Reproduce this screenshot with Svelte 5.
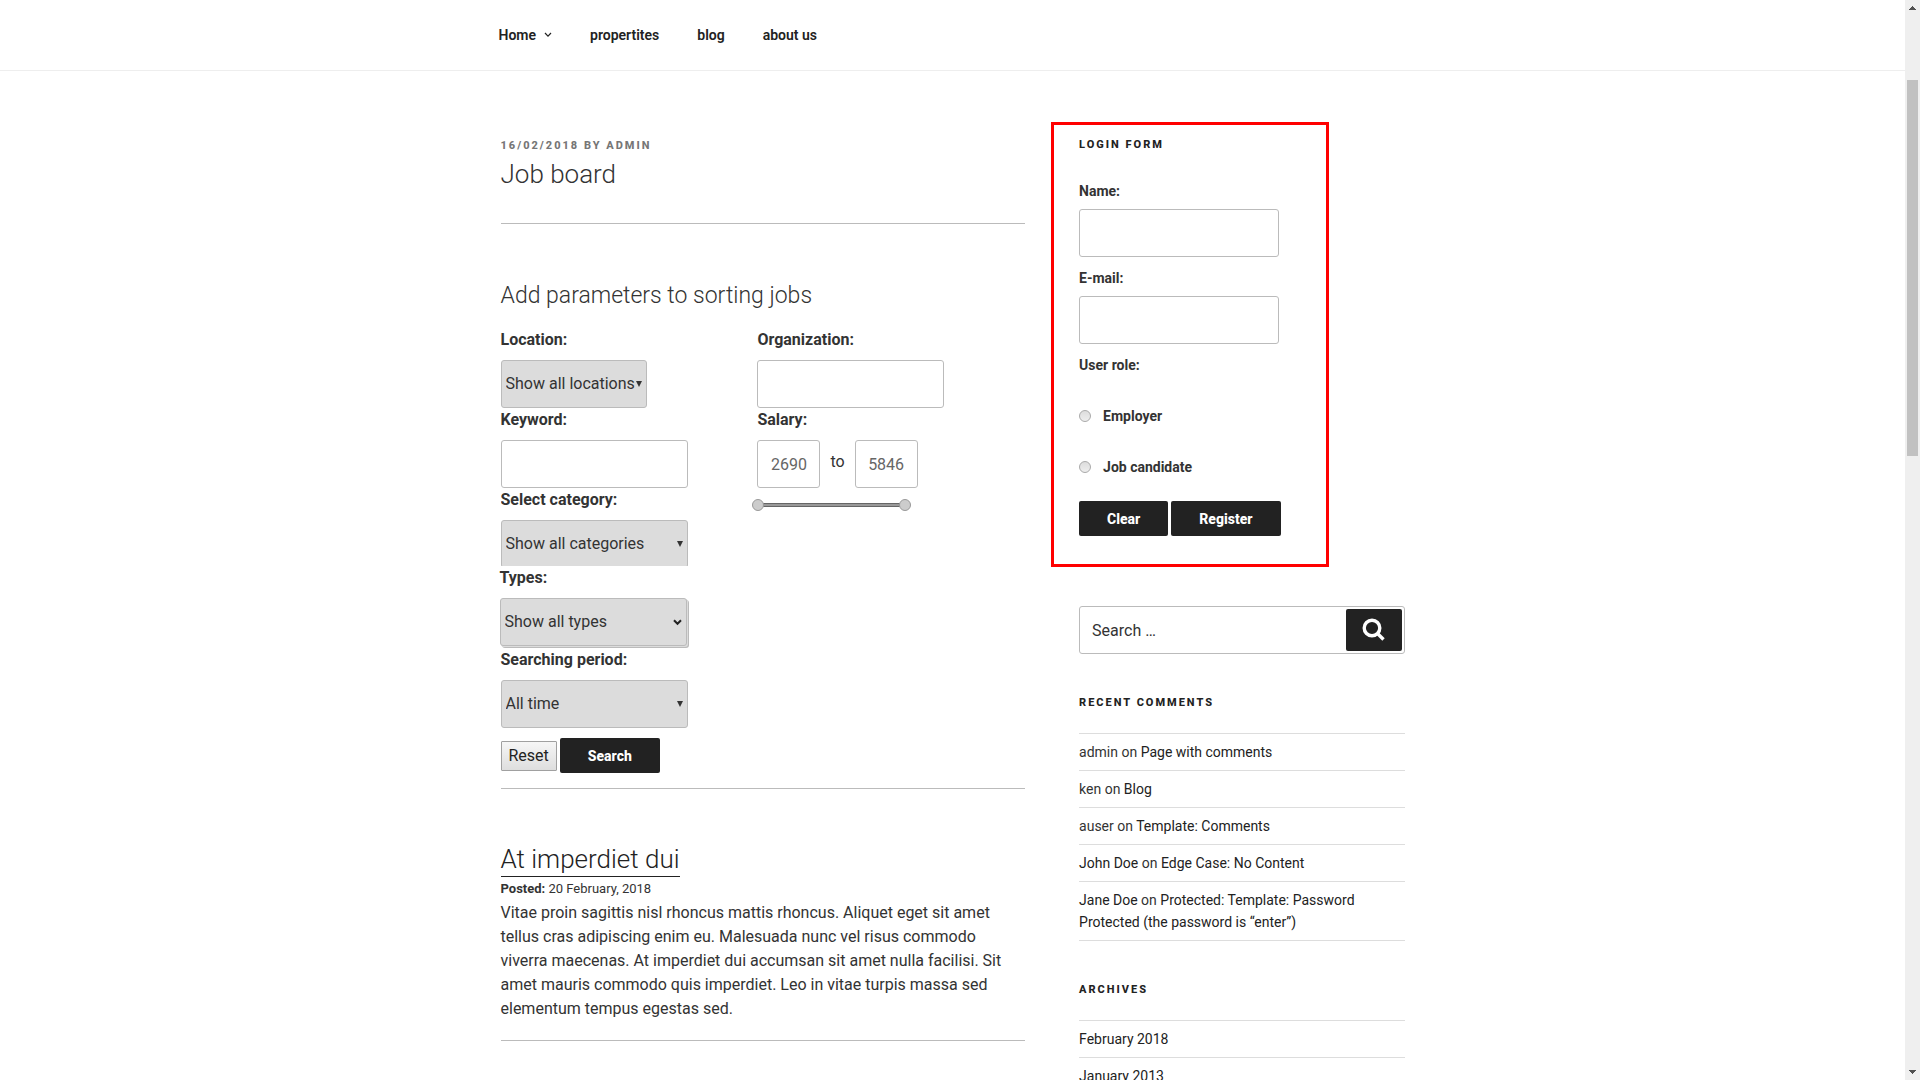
<script>
  let low = $state(2690);
  let high = $state(5846);
  let role = $state('');

  const comments = [
    { author: 'admin', post: 'Page with comments' },
    { author: 'ken', post: 'Blog' },
    { author: 'auser', post: 'Template: Comments' },
    { author: 'John Doe', post: 'Edge Case: No Content', linked: true },
    { author: 'Jane Doe', post: 'Protected: Template: Password Protected (the password is “enter”)', linked: true }
  ];
  const archives = ['February 2018', 'January 2013'];
</script>

<div class="window">
  <div class="page">
    <header>
      <nav class="wrap" aria-label="Main">
        <a href="#home">Home
          <svg class="chevron" viewBox="0 0 8 6" aria-hidden="true"><path d="M1 1l3 3.2L7 1" /></svg>
        </a>
        <a href="#propertites">propertites</a>
        <a href="#blog">blog</a>
        <a href="#about">about us</a>
      </nav>
    </header>

    <div class="wrap columns">
      <main>
        <p class="meta">16/02/2018 by admin</p>
        <h1>Job board</h1>
        <hr />

        <h2>Add parameters to sorting jobs</h2>
        <form class="filters" onsubmit={(e) => e.preventDefault()}>
          <div class="fields">
            <div class="field">
              <label for="location">Location:</label>
              <span class="select short">
                <select id="location"><option>Show all locations</option></select>
                <svg class="caret" viewBox="0 0 6 6" aria-hidden="true"><path d="M0 0h6L3 6z" /></svg>
              </span>
            </div>
            <div class="field">
              <label for="keyword">Keyword:</label>
              <input id="keyword" type="text" />
            </div>
            <div class="field clipped">
              <label for="category">Select category:</label>
              <span class="select">
                <select id="category"><option>Show all categories</option></select>
                <svg class="caret" viewBox="0 0 6 6" aria-hidden="true"><path d="M0 0h6L3 6z" /></svg>
              </span>
            </div>
            <div class="field types">
              <label for="types">Types:</label>
              <span class="select">
                <select id="types"><option>Show all types</option></select>
                <svg class="arrow" viewBox="0 0 9 7" aria-hidden="true"><path d="M1 1.2l3.5 3.6L8 1.2" /></svg>
              </span>
            </div>
            <div class="field">
              <label for="period">Searching period:</label>
              <span class="select">
                <select id="period"><option>All time</option></select>
                <svg class="caret" viewBox="0 0 6 6" aria-hidden="true"><path d="M0 0h6L3 6z" /></svg>
              </span>
            </div>
            <div class="actions">
              <button type="reset" class="plain">Reset</button>
              <button type="submit" class="dark">Search</button>
            </div>
          </div>

          <div class="fields">
            <div class="field">
              <label for="organization">Organization:</label>
              <input id="organization" type="text" />
            </div>
            <div class="field">
              <label for="low">Salary:</label>
              <div class="salary">
                <input id="low" type="text" bind:value={low} />
                <span>to</span>
                <input type="text" aria-label="Maximum salary" bind:value={high} />
              </div>
            </div>
            <div class="slider">
              <input type="range" aria-label="Lowest salary" min="2690" max="5846" bind:value={low} />
              <input type="range" aria-label="Highest salary" min="2690" max="5846" bind:value={high} />
            </div>
          </div>
        </form>
        <hr />

        <article>
          <h1><a href="#job">At imperdiet dui</a></h1>
          <p class="posted"><strong>Posted:</strong> 20 February, 2018</p>
          <p>
            Vitae proin sagittis nisl rhoncus mattis rhoncus. Aliquet eget sit amet tellus cras
            adipiscing enim eu. Malesuada nunc vel risus commodo viverra maecenas. At imperdiet dui
            accumsan sit amet nulla facilisi. Sit amet mauris commodo quis imperdiet. Leo in vitae
            turpis massa sed elementum tempus egestas sed.
          </p>
        </article>
        <hr />
      </main>

      <aside>
        <section class="login">
          <h3>Login form</h3>
          <form onsubmit={(e) => e.preventDefault()}>
            <label for="name">Name:</label>
            <input id="name" type="text" />
            <label for="email">E-mail:</label>
            <input id="email" type="email" />
            <fieldset>
              <legend>User role:</legend>
              <label class="role"><input type="radio" value="employer" bind:group={role} />Employer</label>
              <label class="role"><input type="radio" value="candidate" bind:group={role} />Job candidate</label>
            </fieldset>
            <div class="buttons">
              <button type="reset" class="dark">Clear</button>
              <button type="submit" class="dark">Register</button>
            </div>
          </form>
        </section>

        <form class="search" role="search" onsubmit={(e) => e.preventDefault()}>
          <input type="search" placeholder="Search …" aria-label="Search" />
          <button type="submit" aria-label="Search">
            <svg viewBox="0 0 24 24" aria-hidden="true"><circle cx="10" cy="10" r="7.8" /><path d="M15.5 15.5l6 6" /></svg>
          </button>
        </form>

        <section class="list">
          <h3>Recent comments</h3>
          <ul>
            {#each comments as c}
              <li>
                {#if c.linked}<a href="#author">{c.author}</a>{:else}{c.author}{/if} on <a href="#post">{c.post}</a>
              </li>
            {/each}
          </ul>
        </section>

        <section class="list">
          <h3>Archives</h3>
          <ul>
            {#each archives as month}
              <li><a href="#archive">{month}</a></li>
            {/each}
          </ul>
        </section>
      </aside>
    </div>
  </div>

  <div class="scrollbar" aria-hidden="true">
    <svg viewBox="0 0 7 4" shape-rendering="crispEdges"><path d="M3 0h1v1h1v1h1v1h1v1H0V3h1V2h1V1h1z" /></svg>
    <div class="track"><div class="thumb"></div></div>
    <svg viewBox="0 0 7 4" shape-rendering="crispEdges"><path d="M0 0h7v1H6v1H5v1H4v1H3V3H2V2H1V1H0z" /></svg>
  </div>
</div>

<style>
  :global(body) {
    margin: 0;
    background: #fff;
  }
  .window {
    display: grid;
    grid-template-columns: 1fr 15px;
    height: 100vh;
    overflow: hidden;
    color: #333;
    font: 400 16px/24px Roboto, 'Liberation Sans', sans-serif;
  }
  .window *,
  .window *::before {
    box-sizing: border-box;
  }
  .page {
    min-width: 0;
    overflow: hidden;
  }
  .wrap {
    max-width: 1000px;
    margin: 0 auto;
    padding: 0 48px;
  }
  a {
    color: #222;
    text-decoration: none;
  }
  p,
  h1,
  h2,
  h3,
  ul,
  fieldset {
    margin: 0;
    padding: 0;
    border: 0;
  }

  header {
    border-bottom: 1px solid #eee;
  }
  nav {
    display: flex;
    gap: 38px;
    height: 70px;
    align-items: center;
    font-size: 14px;
    font-weight: 600;
  }
  nav a {
    display: flex;
    align-items: center;
    gap: 8px;
  }
  nav a:first-child {
    margin-left: -2px;
  }
  .chevron {
    width: 8px;
    height: 6px;
  }
  .chevron path,
  .arrow path {
    fill: none;
    stroke: #222;
    stroke-width: 1.2;
  }

  .columns {
    display: grid;
    grid-template-columns: 58% 36%;
    justify-content: space-between;
    padding-top: 51px;
  }
  main {
    padding-top: 16px;
  }
  .meta,
  h3 {
    font-size: 11px;
    font-weight: 800;
    line-height: 16px;
    letter-spacing: 2px;
    text-transform: uppercase;
  }
  .meta {
    color: #767676;
  }
  h1 {
    padding-top: 2px;
    font-size: 26px;
    font-weight: 300;
    line-height: 36px;
  }
  hr {
    height: 1px;
    margin: 0;
    border: 0;
    background: #bbb;
  }
  h1 + hr {
    margin-top: 31px;
  }
  h2 {
    margin-top: 56px;
    font-size: 23px;
    font-weight: 300;
    line-height: 32px;
  }

  .filters {
    display: grid;
    grid-template-columns: 49% 51%;
    padding: 16px 0 15px;
  }
  label,
  legend {
    display: block;
    padding: 0;
    font-weight: 700;
  }
  .field {
    display: grid;
    gap: 8px;
    justify-items: start;
  }
  input,
  select,
  button {
    margin: 0;
    font: inherit;
  }
  input[type='text'],
  input[type='email'],
  input[type='search'] {
    width: 187px;
    height: 48px;
    padding: 0 12px;
    border: 1px solid #bbb;
    border-radius: 3px;
    background: #fff;
    color: #666;
    outline: 0;
  }
  .select {
    display: grid;
    width: 187px;
    align-items: center;
  }
  .select > * {
    grid-area: 1 / 1;
  }
  .select.short {
    width: 146px;
  }
  select {
    width: 100%;
    height: 48px;
    padding: 0 4px;
    border: 1px solid #bbb;
    border-radius: 3px;
    background: #dcdcdc;
    color: #333;
    appearance: none;
  }
  .caret,
  .arrow {
    justify-self: end;
    pointer-events: none;
  }
  .caret {
    width: 6px;
    height: 6px;
    margin-right: 5px;
    fill: #333;
  }
  .arrow {
    width: 9px;
    height: 7px;
    margin-right: 5px;
  }
  .arrow path {
    stroke-width: 2;
  }
  .clipped {
    height: 78px;
    overflow: hidden;
  }
  .types {
    margin-left: -1px;
    padding-bottom: 2px;
  }
  .types select {
    box-shadow: 1px 1px 0 #dcdcdc, 2px 2px 0 #bbb;
  }
  .actions,
  .buttons {
    display: flex;
    align-items: center;
    gap: 3px;
  }
  .actions {
    padding-top: 10px;
  }
  .dark {
    height: 35px;
    padding: 0 28px;
    border: 0;
    border-radius: 2px;
    background: #222;
    color: #fff;
    font-size: 14px;
    font-weight: 800;
  }
  .plain {
    height: 30px;
    padding: 0 7px;
    border: 1px solid #a0a0a0;
    border-radius: 1px;
    background: linear-gradient(#f6f6f6, #dedede);
    color: #222;
  }
  .salary {
    display: flex;
    gap: 10px;
    line-height: 44px;
  }
  .salary input[type='text'] {
    width: 63px;
    padding: 0;
    text-align: center;
  }
  .slider {
    display: grid;
    width: 159px;
    margin: 11px 0 0 -5px;
    align-items: center;
  }
  .slider::before {
    content: '';
    grid-area: 1 / 1;
    height: 4px;
    margin: 0 6px;
    border: solid #666;
    border-width: 1px 0;
    background: #999;
  }
  .slider input {
    grid-area: 1 / 1;
    width: 100%;
    height: 12px;
    appearance: none;
    background: none;
    pointer-events: none;
  }
  .slider input::-webkit-slider-thumb {
    appearance: none;
    width: 12px;
    height: 12px;
    border: 1px solid #999;
    border-radius: 50%;
    background: #ccc;
    pointer-events: auto;
  }

  article {
    padding: 52px 0 19px;
  }
  article h1 {
    padding: 0;
    margin-bottom: 0;
  }
  article h1 a {
    display: inline-block;
    border-bottom: 1px solid #222;
    line-height: 34px;
  }
  .posted {
    font-size: 13px;
    line-height: 24px;
  }

  h3 {
    color: #222;
  }
  .login {
    width: 278px;
    margin-left: -28px;
    padding: 12px 25px 28px;
    border: 3px solid #f00;
    font-size: 14px;
  }
  .login form {
    padding-top: 26px;
  }
  .login label,
  .login legend {
    line-height: 24px;
  }
  .login input[type='text'],
  .login input[type='email'] {
    width: 200px;
    margin: 6px 0 9px;
  }
  .login .role {
    display: flex;
    align-items: center;
    gap: 12px;
    margin-top: 27px;
  }
  .role input {
    width: 12px;
    height: 12px;
    border: 1px solid #aaa;
    border-radius: 50%;
    background: linear-gradient(#ddd, #eee);
    appearance: none;
  }
  .role input:checked {
    background: #666;
  }
  .buttons {
    padding-top: 22px;
  }

  .search {
    display: grid;
    margin-top: 39px;
    align-items: center;
  }
  .search > * {
    grid-area: 1 / 1;
  }
  .search input[type='search'] {
    width: 100%;
    appearance: none;
  }
  .search input::placeholder {
    color: #333;
    opacity: 1;
  }
  .search button {
    display: grid;
    width: 56px;
    height: 42px;
    margin-right: 3px;
    padding: 0;
    place-items: center;
    justify-self: end;
    border: 0;
    border-radius: 2px;
    background: #222;
  }
  .search svg {
    width: 24px;
    height: 24px;
    fill: none;
    stroke: #fff;
    stroke-width: 3.4;
  }

  .list {
    padding-top: 41px;
    font-size: 14px;
    line-height: 22px;
  }
  .list ul {
    margin-top: 22px;
    border-top: 1px solid #ddd;
    list-style: none;
  }
  .list li {
    padding: 7px 0;
    border-bottom: 1px solid #ddd;
  }

  .scrollbar {
    display: grid;
    grid-template-rows: auto 1fr auto;
    justify-items: center;
    padding: 6px 0;
    background: #efefef;
  }
  .scrollbar svg {
    width: 7px;
    height: 4px;
    fill: #505050;
  }
  .track {
    width: 11px;
    padding-top: 70px;
  }
  .thumb {
    height: 38%;
    background: #c1c1c1;
  }
</style>
